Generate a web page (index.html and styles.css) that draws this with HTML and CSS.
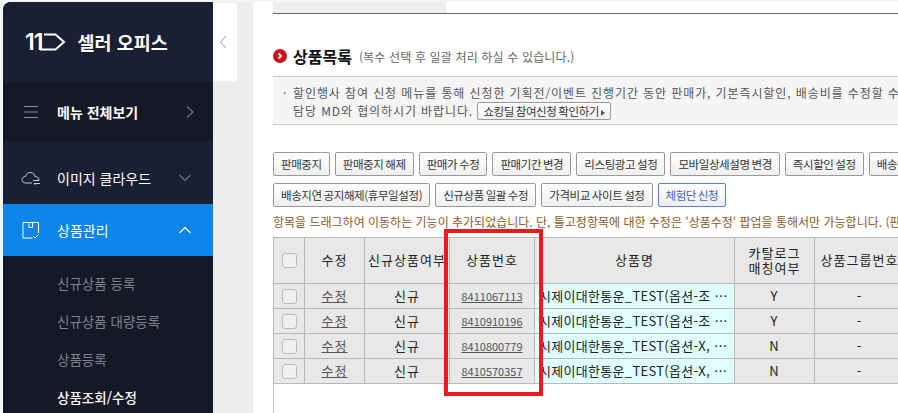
FILE: index.html
```html
<!DOCTYPE html>
<html lang="ko">
<head>
    <meta charset="UTF-8">
    <title>셀러 오피스 - 상품목록</title>
    <link rel="stylesheet" href="styles.css">
</head>
<body>
    <div class="page">
        <aside class="sidebar">
            <div class="logo">
                <span class="logo-num">11</span>
                <svg class="logo-mark" width="26" height="18" viewBox="0 0 26 18"><path d="M0 16.500H15.500L24 9L15.500 1.500H4" fill="none" stroke="#fff" stroke-width="2"/></svg>
                <span class="logo-text">셀러 오피스</span>
            </div>
            <div class="menu-row menu-all">
                <svg class="menu-icon" width="16" height="14" viewBox="0 0 16 14"><path d="M1 1.500H15M1 7H15M1 12.500H15" stroke="#8d919c" stroke-width="1"/></svg>
                <span class="menu-label bold">메뉴 전체보기</span>
                <svg class="arrow arrow-right" width="10" height="14" viewBox="0 0 10 14"><path d="M2 1.500L8 7L2 12.500" fill="none" stroke="#6d7280" stroke-width="1.200"/></svg>
            </div>
            <div class="menu-row menu-cloud">
                <svg class="menu-icon" width="20" height="14" viewBox="0 0 20 14"><path d="M11 12H5C2 12 1 10 1 8.500C1 6.500 3 5.500 4.500 5.500C5 3 7 1.500 9.500 1.500C12 1.500 14 3.500 14 5.500C16 5.500 18 6.500 18 8.500" fill="none" stroke="#c9ccd3" stroke-width="1"/><path d="M12 9.500H18M18 9.500L16.500 8M19 12.500H13M13 12.500L14.500 14" fill="none" stroke="#c9ccd3" stroke-width="1"/></svg>
                <span class="menu-label">이미지 클라우드</span>
                <svg class="arrow" width="14" height="10" viewBox="0 0 14 10"><path d="M1.500 2L7 7.500L12.500 2" fill="none" stroke="#6d7280" stroke-width="1.200"/></svg>
            </div>
            <div class="menu-row menu-active">
                <svg class="menu-icon" width="17" height="17" viewBox="0 0 17 17"><path d="M10 16H.5V.5H16V11M6.500 .5V5.500H10V.5" fill="none" stroke="#fff" stroke-width="1"/><path d="M10.500 14L12.500 16L16 12.500" fill="none" stroke="#fff" stroke-width="1"/></svg>
                <span class="menu-label">상품관리</span>
                <svg class="arrow" width="14" height="10" viewBox="0 0 14 10"><path d="M1.500 8L7 2.500L12.500 8" fill="none" stroke="#fff" stroke-width="1.200"/></svg>
            </div>
            <ul class="submenu">
                <li>신규상품 등록</li>
                <li>신규상품 대량등록</li>
                <li>상품등록</li>
                <li class="current">상품조회/수정</li>
            </ul>
        </aside>

        <div class="gutter">
            <div class="collapse">
                <svg width="8" height="14" viewBox="0 0 8 14"><path d="M7 1L1.500 7L7 13" fill="none" stroke="#999" stroke-width="1"/></svg>
            </div>
        </div>

        <main class="content">
            <div class="topbar"><div class="topbar-left"></div></div>

            <h2 class="title">
                <svg width="14" height="14" viewBox="0 0 14 14"><circle cx="7" cy="7" r="7" fill="#c8141e"/><path d="M5.500 4.500L8 7L5.500 9.500" fill="none" stroke="#fff" stroke-width="1.800"/></svg>
                <span class="title-text">상품목록</span>
                <span class="title-sub">(복수 선택 후 일괄 처리 하실 수 있습니다.)</span>
            </h2>

            <div class="notice">
                <p><span class="dot">·</span>할인행사 참여 신청 메뉴를 통해 신청한 기획전/이벤트 진행기간 동안 판매가, 기본즉시할인, 배송비를 수정할 수 없습니다.</p>
                <p class="notice-second">담당 MD와 협의하시기 바랍니다. <button class="btn btn-small">쇼킹딜 참여신청 확인하기 <span class="tri"></span></button></p>
            </div>

            <div class="btn-row first">
                <button class="btn">판매중지</button>
                <button class="btn">판매중지 해제</button>
                <button class="btn">판매가 수정</button>
                <button class="btn">판매기간 변경</button>
                <button class="btn">리스팅광고 설정</button>
                <button class="btn">모바일상세설명 변경</button>
                <button class="btn">즉시할인 설정</button>
                <button class="btn">배송비 설정</button>
            </div>
            <div class="btn-row">
                <button class="btn">배송지연 공지해제(휴무일설정)</button>
                <button class="btn">신규상품 일괄 수정</button>
                <button class="btn">가격비교 사이트 설정</button>
                <button class="btn btn-blue">체험단 신청</button>
            </div>

            <p class="drag-note">항목을 드래그하여 이동하는 기능이 추가되었습니다. 단, 틀고정항목에 대한 수정은 '상품수정' 팝업을 통해서만 가능합니다. (판매상태 변경 포함)</p>

            <div class="grid-box">
                <table class="grid">
                    <colgroup>
                        <col class="c-check"><col class="c-edit"><col class="c-new"><col class="c-no"><col class="c-name"><col class="c-cat"><col class="c-group">
                    </colgroup>
                    <thead>
                        <tr>
                            <th><span class="check"></span></th>
                            <th>수정</th>
                            <th>신규상품여부</th>
                            <th>상품번호</th>
                            <th>상품명</th>
                            <th>카탈로그<br>매칭여부</th>
                            <th>상품그룹번호</th>
                        </tr>
                    </thead>
                    <tbody>
                        <tr>
                            <td><span class="check"></span></td>
                            <td><a href="#">수정</a></td>
                            <td>신규</td>
                            <td><a class="num" href="#">8411067113</a></td>
                            <td class="name">시제이대한통운_TEST(옵션-조 ⋯</td>
                            <td>Y</td>
                            <td>-</td>
                        </tr>
                        <tr>
                            <td><span class="check"></span></td>
                            <td><a href="#">수정</a></td>
                            <td>신규</td>
                            <td><a class="num" href="#">8410910196</a></td>
                            <td class="name">시제이대한통운_TEST(옵션-조 ⋯</td>
                            <td>Y</td>
                            <td>-</td>
                        </tr>
                        <tr>
                            <td><span class="check"></span></td>
                            <td><a href="#">수정</a></td>
                            <td>신규</td>
                            <td><a class="num" href="#">8410800779</a></td>
                            <td class="name">시제이대한통운_TEST(옵션-X, ⋯</td>
                            <td>N</td>
                            <td>-</td>
                        </tr>
                        <tr>
                            <td><span class="check"></span></td>
                            <td><a href="#">수정</a></td>
                            <td>신규</td>
                            <td><a class="num" href="#">8410570357</a></td>
                            <td class="name">시제이대한통운_TEST(옵션-X, ⋯</td>
                            <td>N</td>
                            <td>-</td>
                        </tr>
                    </tbody>
                </table>
            </div>
            <div class="highlight"></div>
        </main>
    </div>
</body>
</html>
```

FILE: styles.css
```css
html, body {
    margin: 0;
    padding: 0;
    height: 100%;
    overflow: hidden;
}

body {
    background-color: #f5f5f5;
    font-family: "Noto Sans CJK KR", "Noto Sans", sans-serif;
    font-size: 12px;
    color: #222;
}

.page {
    display: flex;
    width: 898px;
    height: 413px;
    padding-top: 2px;
    box-sizing: border-box;
    overflow: hidden;
}

/* Sidebar */
.sidebar {
    flex: none;
    width: 210px;
    margin-left: 3px;
    background-color: #141925;
    border-top-left-radius: 8px;
    overflow: hidden;
    color: #fff;
}

.logo {
    display: flex;
    align-items: center;
    height: 80px;
    padding: 0 0 0 22px;
    background-color: #1a2033;
    box-sizing: border-box;
}

.logo-num {
    font-family: "Inter", sans-serif;
    font-size: 23px;
    font-weight: 600;
    letter-spacing: -1px;
}

.logo-mark {
    margin-left: -2px;
}

.logo-text {
    margin-left: 11px;
    font-size: 18.500px;
    font-weight: 700;
    white-space: nowrap;
}

.menu-row {
    display: flex;
    align-items: center;
    padding-left: 18px;
    box-sizing: border-box;
}

.menu-all {
    height: 60px;
    background-color: #141925;
}

.menu-cloud {
    height: 62px;
    padding-top: 10px;
    background-color: #1a2033;
}

.menu-active {
    height: 52px;
    background-color: #0b85e8;
}

.menu-icon {
    flex: none;
    width: 20px;
}

.menu-label {
    margin-left: 16px;
    font-size: 14px;
    white-space: nowrap;
    flex: 1;
}

.menu-label.bold {
    font-weight: 700;
}

.arrow {
    margin-right: 21px;
}

.arrow-right {
    margin-right: 18px;
}

.submenu {
    list-style: none;
    margin: 0;
    padding: 7.500px 0 0 54px;
}

.submenu li {
    height: 38px;
    line-height: 38px;
    font-size: 13.500px;
    color: #7b8290;
    white-space: nowrap;
}

.submenu li.current {
    color: #fff;
    font-weight: 500;
}

/* Gap beside the sidebar */
.gutter {
    flex: none;
    width: 40px;
    background-color: #eee;
}

.collapse {
    display: flex;
    align-items: center;
    justify-content: center;
    width: 20px;
    height: 78px;
    margin-top: 1px;
    padding-right: 4px;
    background-color: #fff;
}

/* Content */
.content {
    position: relative;
    flex: 1;
    min-width: 0;
    padding-left: 20px;
    background-color: #fff;
    overflow: hidden;
    white-space: nowrap;
}

.topbar {
    height: 11px;
    border-bottom: 1px solid #666;
}

.topbar-left {
    width: 173px;
    height: 11px;
    background-color: #eee;
}

.title {
    display: flex;
    align-items: center;
    height: 20px;
    margin: 32px 0 0;
    font-weight: 400;
}

.title-text {
    margin-left: 6px;
    font-size: 16px;
    font-weight: 700;
    color: #111;
}

.title-sub {
    margin-left: 7px;
    font-size: 12px;
    letter-spacing: .15px;
    color: #666;
}

.notice {
    height: 40px;
    margin-top: 10px;
    padding: 7px 0 0 10px;
    background-color: #f5f5f5;
    border-top: 1px solid #ccc;
    border-bottom: 1px solid #ccc;
    color: #555;
}

.notice p {
    margin: 0;
    height: 18px;
    line-height: 18px;
    font-size: 12px;
    letter-spacing: .9px;
}

.notice .notice-second {
    padding-left: 10px;
}

.dot {
    display: inline-block;
    width: 10px;
}

.btn {
    height: 24px;
    padding: 0 7px;
    background: linear-gradient(#fff, #efefef);
    border: 1px solid #999;
    border-radius: 2px;
    font-family: inherit;
    font-size: 11.500px;
    letter-spacing: -.4px;
    word-spacing: -1px;
    color: #333;
    white-space: nowrap;
    flex: none;
}

.btn-small {
    height: 18px;
    padding: 0 5px;
    line-height: 14px;
    vertical-align: top;
}

.tri {
    display: inline-block;
    border-left: 4px solid #555;
    border-top: 3px solid transparent;
    border-bottom: 3px solid transparent;
}

.btn-blue {
    border-color: #5b7fdc;
    color: #3d63cf;
}

.btn-row {
    display: flex;
    gap: 5px;
    margin-top: 7px;
}

.btn-row.first {
    margin-top: 27px;
}

.drag-note {
    margin: 6px 0 0;
    height: 18px;
    line-height: 18px;
    font-size: 12px;
    color: #8b5a1e;
}

/* Product grid */
.grid-box {
    margin-top: 6px;
    height: 200px;
    border-left: 1px solid #bbb;
}

.grid {
    table-layout: fixed;
    width: 631px;
    border-collapse: collapse;
    margin-left: -1px;
    background-color: #e8e8e8;
    border-top: 1px solid #bbb;
}

.c-check { width: 31px; }
.c-edit { width: 60px; }
.c-new { width: 85px; }
.c-no { width: 85px; }
.c-name { width: 200px; }
.c-cat { width: 80px; }
.c-group { width: 90px; }

.grid th,
.grid td {
    padding: 0 0 2px;
    border: 1px solid #b8b8b8;
    border-top: 0;
    text-align: center;
    font-weight: 400;
    font-size: 13px;
    letter-spacing: 1px;
    color: #222;
    overflow: hidden;
}

.grid th {
    height: 43px;
    line-height: 15px;
}

.grid td {
    height: 22px;
}

.grid td.name {
    padding-left: 4px;
    text-align: left;
    letter-spacing: .3px;
    background-color: #e0ffff;
}

.grid a {
    color: #555;
}

.grid a.num {
    font-size: 11px;
    letter-spacing: 0;
}

.check {
    display: inline-block;
    width: 13px;
    height: 13px;
    border: 1px solid #bbb;
    border-radius: 3px;
    background-color: #f0f0f0;
    vertical-align: middle;
}

/* Red annotation drawn over the screenshot */
.highlight {
    position: absolute;
    left: 191px;
    top: 227px;
    width: 91px;
    height: 159px;
    border: 4px solid #e81c1c;
}
```
